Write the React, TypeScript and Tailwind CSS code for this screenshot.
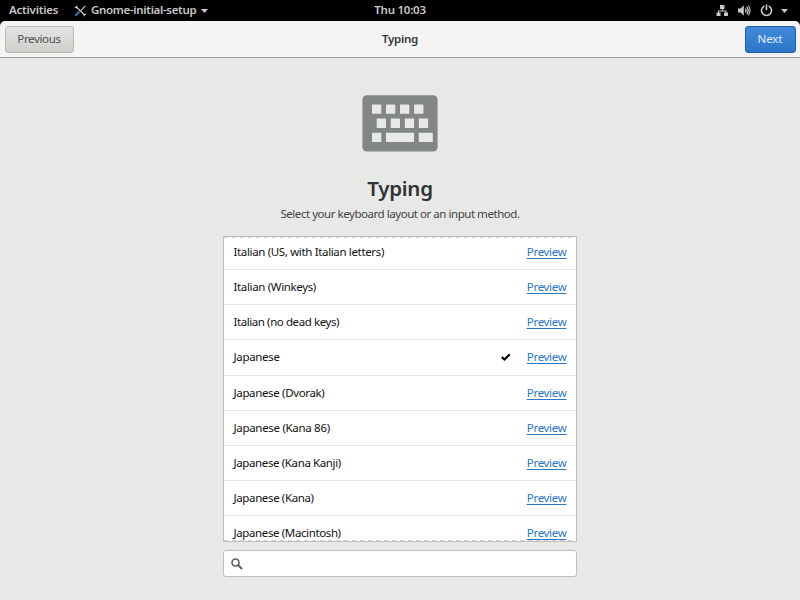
import React from "react";

const layouts = [
  { name: "Italian (US, with Italian letters)", track: "tracking-[-0.35px]" },
  { name: "Italian (Winkeys)", track: "tracking-[-0.35px]" },
  { name: "Italian (no dead keys)", track: "tracking-[-0.42px]" },
  { name: "Japanese", track: "tracking-[-0.32px]", selected: true },
  { name: "Japanese (Dvorak)", track: "tracking-[-0.35px]" },
  { name: "Japanese (Kana 86)", track: "tracking-[-0.31px]" },
  { name: "Japanese (Kana Kanji)", track: "tracking-[-0.38px]" },
  { name: "Japanese (Kana)", track: "tracking-[-0.37px]" },
  { name: "Japanese (Macintosh)", track: "tracking-[-0.38px]" },
];

function ToolsIcon() {
  return (
    <svg width="13" height="12" viewBox="0 0 13 12" fill="none" className="ml-[16px] shrink-0">
      <path d="M2 1.500 10.500 10" stroke="#c8c8c8" strokeWidth="1.3" />
      <path d="M0.8 2.400 2.600 2.600 2.800 0.700M10 11.200 10.200 9.600 12 9.400" stroke="#c8c8c8" strokeWidth="1.1" />
      <path d="M11.300 1 6 6.300" stroke="#b8b8b8" strokeWidth="1.1" />
      <path d="M5.500 6.500 1.300 10.800" stroke="#3e78b8" strokeWidth="2" />
    </svg>
  );
}

function Caret({ className }: { className: string }) {
  return (
    <svg width="7" height="4" viewBox="0 0 7 4" className={className}>
      <path d="M0 0h7L3.500 4z" fill="#c8c8c8" />
    </svg>
  );
}

function NetworkIcon() {
  return (
    <svg width="13" height="13" viewBox="0 0 13 13" className="shrink-0" fill="#c8c8c8">
      <path d="M4 1h4.500v4H4zM.5 8.500h4V12h-4zM8 8.500h4V12H8zM5.800 5h1v1.500h3.700v2h-1v-1H3v1H2v-2h3.800z" />
    </svg>
  );
}

function VolumeIcon() {
  return (
    <svg width="13" height="13" viewBox="0 0 13 13" className="ml-[9px] shrink-0" fill="none">
      <path d="M0 4.500h2.500L5.800 1.200v10.600L2.500 8.500H0z" fill="#c8c8c8" />
      <path d="M7.300 4.500q1.400 2 0 4M8.800 2.800q2.600 3.700 0 7.400" stroke="#c8c8c8" strokeWidth="1.300" />
      <path d="M10.400 1.500q3.200 5 0 10" stroke="#a8a8a8" strokeWidth="1.300" />
    </svg>
  );
}

function PowerIcon() {
  return (
    <svg width="13" height="13" viewBox="0 0 13 13" className="ml-[9px] shrink-0" fill="none" stroke="#c8c8c8" strokeLinecap="round">
      <path d="M3.800 2.300a5 5 0 1 0 5.400 0" strokeWidth="1.600" />
      <path d="M6.500 1v4.800" strokeWidth="1.600" />
    </svg>
  );
}

function KeyboardIcon() {
  return (
    <svg width="76" height="57" viewBox="0 0 76 57" className="shrink-0">
      <rect x=".4" y=".2" width="75.200" height="56.400" rx="4.500" fill="#828685" />
      <g fill="#e8e8e6">
        <rect x="10" y="9.500" width="9.300" height="9.300" rx=".6" />
        <rect x="24" y="9.500" width="9.300" height="9.300" rx=".6" />
        <rect x="38" y="9.500" width="9.300" height="9.300" rx=".6" />
        <rect x="52.100" y="9.500" width="9.300" height="9.300" rx=".6" />
        <rect x="14.700" y="23.600" width="9.300" height="9.300" rx=".6" />
        <rect x="28.700" y="23.600" width="9.300" height="9.300" rx=".6" />
        <rect x="42.800" y="23.600" width="9.300" height="9.300" rx=".6" />
        <rect x="56.800" y="23.600" width="9.300" height="9.300" rx=".6" />
        <rect x="10" y="37.700" width="9.300" height="9.300" rx=".6" />
        <rect x="24" y="37.700" width="28" height="9.300" rx=".6" />
        <rect x="56.800" y="37.700" width="14" height="9.300" rx=".6" />
      </g>
    </svg>
  );
}

function TopBar() {
  return (
    <div className="grid h-[21px] shrink-0 grid-cols-[1fr_auto_1fr] items-center bg-black text-[11.500px] leading-[20px] font-semibold text-[#c8c8c8]">
      <div className="flex items-center pl-[9px]">
        <span className="w-[49px] pb-px tracking-[-0.2px] whitespace-nowrap">Activities</span>
        <ToolsIcon />
        <span className="ml-[4px] w-[105px] pb-px tracking-[-0.31px] whitespace-nowrap">Gnome-initial-setup</span>
        <Caret className="ml-[5px]" />
      </div>
      <span className="pb-px tracking-[-0.25px]">Thu 10:03</span>
      <div className="flex items-center justify-end pr-[12px]">
        <NetworkIcon />
        <VolumeIcon />
        <PowerIcon />
        <Caret className="ml-[8px]" />
      </div>
    </div>
  );
}

function HeaderBar() {
  return (
    <div className="bg-black">
      <div className="grid h-[37px] grid-cols-[1fr_auto_1fr] items-center rounded-t-[5px] border-b border-[#9b9b93] bg-[#f4f4f4] pr-[4.500px] pl-[4.500px] text-[11.500px]">
        <button className="h-[27px] w-[69px] rounded-[3px] border border-[#b9b9b5] bg-linear-to-b from-[#e4e4e2] to-[#cfcfcc] leading-[16px] tracking-[-0.35px] text-[#4c5253]">Previous</button>
        <span className="font-semibold tracking-[-0.3px] text-[#32393a]">Typing</span>
        <button className="h-[27px] w-[51px] justify-self-end rounded-[3px] border border-[#1c5fae] bg-linear-to-b from-[#4289db] to-[#2a76c9] leading-[16px] tracking-[-0.1px] text-[#e4eef9]">Next</button>
      </div>
    </div>
  );
}

export default function App() {
  return (
    <div className="flex h-[600px] w-[800px] flex-col overflow-hidden bg-[#e8e8e6] font-['Noto_Sans','Open_Sans',sans-serif]">
      <TopBar />
      <HeaderBar />
      <main className="flex flex-1 flex-col items-center pt-[37px]">
        <KeyboardIcon />
        <h1 className="mt-[21px] text-[20.500px] leading-[30px] font-semibold tracking-[-0.25px] text-[#2e3436]">Typing</h1>
        <p className="mt-[3px] text-[11.500px] leading-[16px] tracking-[-0.46px] text-[#3e4445]">Select your keyboard layout or an input method.</p>
        <div className="relative mt-[14px] h-[306px] w-[354px] overflow-hidden border border-[#bfbfba] bg-white">
          <ul className="-mt-[2px]">
            {layouts.map((item) => (
              <li key={item.name} className="flex h-[35.156px] items-center border-b border-[#e6e6e4] pr-[9.500px] pl-[9.500px] text-[11.500px] leading-[16px] text-[#111]">
                <span className={item.track}>{item.name}</span>
                {item.selected && (
                  <svg width="10" height="8" viewBox="0 0 10 8" className="mr-[16px] ml-auto">
                    <path d="M.8 4.200 3.500 6.500 8.800 1.200" fill="none" stroke="#000" strokeWidth="2.200" />
                  </svg>
                )}
                <a className={(item.selected ? "" : "ml-auto ") + "tracking-[-0.3px] text-[#2a76c6] underline underline-offset-2"}>Preview</a>
              </li>
            ))}
          </ul>
          <div className="absolute inset-x-0 top-0 h-px bg-[repeating-linear-gradient(90deg,#d4d4d1_0_4px,#fff_4px_8px)]" />
          <div className="absolute inset-x-0 bottom-0 h-px bg-[repeating-linear-gradient(90deg,#d4d4d1_0_4px,#fff_4px_8px)]" />
        </div>
        <div className="mt-[8px] flex h-[27px] w-[354px] items-center rounded-[3px] border border-[#bfbfba] bg-white pl-[7px]">
          <svg width="12" height="12" viewBox="0 0 12 12" fill="none" stroke="#5a605e">
            <circle cx="4.500" cy="4.500" r="3.500" strokeWidth="1.600" />
            <path d="M7 7 11 11" strokeWidth="2" />
          </svg>
        </div>
      </main>
    </div>
  );
}
